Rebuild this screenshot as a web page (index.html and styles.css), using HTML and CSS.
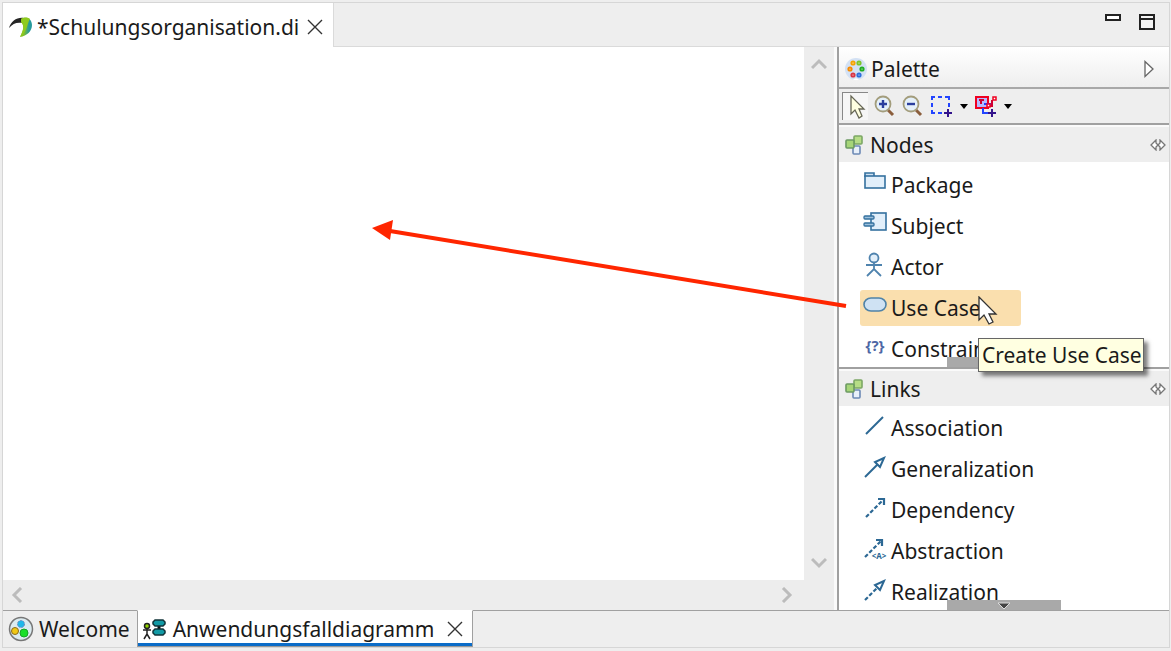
FILE: index.html
```html
<!DOCTYPE html>
<html lang="de">

<head>
    <meta charset="UTF-8">
    <meta name="viewport" content="width=device-width, initial-scale=1.0">
    <title>Schulungsorganisation.di</title>
    <link rel="stylesheet" href="styles.css">
</head>

<body>
    <div class="editor">
        <header class="tab-bar">
            <div class="file-tab">
                <svg class="file-icon" width="26" height="22" viewBox="0 0 26 22">
                    <defs>
                        <linearGradient id="beak" x1="0" x2="1">
                            <stop offset="0.3" stop-color="#84c225" />
                            <stop offset="0.75" stop-color="#279a9c" />
                        </linearGradient>
                    </defs>
                    <path d="M1 12C3 5 9 1 16 2L15 7C9 6 5 7 1 12Z" fill="#252525" />
                    <path d="M13 3C17 0 24 2 24 9C24 15 19 20 12 21C15 16 17 10 13 6Z" fill="url(#beak)" />
                    <path d="M13 3C16 1 20 1 22 3C19 7 20 15 12 21C15 15 17 9 13 6Z" fill="#8fca1f" />
                </svg>
                <button class="tab-label">*Schulungsorganisation.di</button>
                <button class="close" aria-label="Close">
                    <svg width="16" height="16" viewBox="0 0 16 16"><path d="M1 1L15 15M15 1L1 15" stroke="#333" stroke-width="1.4" /></svg>
                </button>
            </div>
            <div class="window-buttons">
                <button aria-label="Minimize">
                    <svg width="16" height="16" viewBox="0 0 16 16"><path d="M1 1H15V6H1Z" fill="#fff" stroke="#222" stroke-width="2" /></svg>
                </button>
                <button aria-label="Maximize">
                    <svg width="16" height="16" viewBox="0 0 16 16"><path d="M1 1H15V15H1ZM1 5H15" fill="#f4f4f4" stroke="#222" stroke-width="2" /></svg>
                </button>
            </div>
        </header>

        <main class="workspace">
            <div class="diagram">
                <div class="canvas"></div>
                <div class="scroll-v">
                    <button aria-label="Scroll up"><svg width="16" height="12" viewBox="0 0 16 12"><path d="M1 10L8 3L15 10" fill="none" stroke="#bcbcbc" stroke-width="3" /></svg></button>
                    <button aria-label="Scroll down"><svg width="16" height="12" viewBox="0 0 16 12"><path d="M1 2L8 9L15 2" fill="none" stroke="#bcbcbc" stroke-width="3" /></svg></button>
                </div>
                <div class="scroll-h">
                    <button aria-label="Scroll left"><svg width="12" height="16" viewBox="0 0 12 16"><path d="M10 1L3 8L10 15" fill="none" stroke="#bcbcbc" stroke-width="3" /></svg></button>
                    <button aria-label="Scroll right"><svg width="12" height="16" viewBox="0 0 12 16"><path d="M2 1L9 8L2 15" fill="none" stroke="#bcbcbc" stroke-width="3" /></svg></button>
                </div>
            </div>

            <aside class="palette">
                <div class="palette-header">
                    <svg width="24" height="24" viewBox="0 0 24 24">
                        <circle cx="12" cy="12" r="11" fill="#d3e1f4" />
                        <path d="M9 23A3.500 3.500 0 0 1 15 23Z" fill="#fff" />
                        <g fill="#fff" stroke-width="2">
                            <circle cx="9" cy="6" r="1.600" stroke="#f5a300" />
                            <circle cx="15" cy="6" r="1.600" stroke="#7dc52a" />
                            <circle cx="6" cy="12" r="1.600" stroke="#f58b00" />
                            <circle cx="18" cy="12" r="1.600" stroke="#1fae22" />
                            <circle cx="9" cy="18" r="1.600" stroke="#d93545" />
                            <circle cx="15" cy="18" r="1.600" stroke="#2d6fdc" />
                        </g>
                    </svg>
                    <span class="title">Palette</span>
                    <button aria-label="Hide palette"><svg width="10" height="18" viewBox="0 0 10 18"><path d="M1 1.500L9 9L1 16.500Z" fill="#fff" stroke="#666" stroke-width="1.300" /></svg></button>
                </div>

                <div class="toolbar">
                    <button class="tool selected" aria-label="Select">
                        <svg width="18" height="26" viewBox="0 0 18 26"><path d="M3 2V20L7 16L11 24L14 22L11 15H16Z" fill="#ffffe0" stroke="#666655" stroke-width="1.300" /></svg>
                    </button>
                    <button class="tool" aria-label="Zoom in">
                        <svg width="22" height="22" viewBox="0 0 22 22">
                            <path d="M14 15L19 20" stroke="#8b5e3c" stroke-width="3" />
                            <circle cx="9" cy="9" r="7.500" fill="#e4f0fa" stroke="#a39d7c" stroke-width="1.800" />
                            <path d="M5 9H13M9 5V13" stroke="#2a3f9e" stroke-width="2.400" />
                        </svg>
                    </button>
                    <button class="tool" aria-label="Zoom out">
                        <svg width="22" height="22" viewBox="0 0 22 22">
                            <path d="M14 15L19 20" stroke="#8b5e3c" stroke-width="3" />
                            <circle cx="9" cy="9" r="7.500" fill="#e4f0fa" stroke="#a39d7c" stroke-width="1.800" />
                            <path d="M5 9H13" stroke="#2a3f9e" stroke-width="2.400" />
                        </svg>
                    </button>
                    <button class="tool" aria-label="Marquee">
                        <svg width="24" height="22" viewBox="0 0 24 22">
                            <path d="M5 2H2V5M8 2H12M15 2H19V5M2 8V12M19 8V12M2 15V18H5M8 18H12" fill="none" stroke="#2244ff" stroke-width="2" />
                            <path d="M18 14V22M14 18H22" stroke="#33148c" stroke-width="2" />
                        </svg>
                        <span class="drop-arrow"></span>
                    </button>
                    <button class="tool" aria-label="Pin tools">
                        <svg width="24" height="22" viewBox="0 0 24 22">
                            <rect x="2" y="2" width="12" height="11" fill="#b7b9ff" stroke="#f00020" stroke-width="2" />
                            <path d="M9 13V18H14M10 9H19" fill="none" stroke="#2244ff" stroke-width="2" />
                            <path d="M5 5H10M7 5V9M14 11H18V5" fill="none" stroke="#d00030" stroke-width="2" />
                            <path d="M19 2H22V5H19ZM13 9H16V12H13Z" fill="#fff" stroke="#f00020" stroke-width="1.500" />
                            <path d="M18 14V22M14 18H22" stroke="#33148c" stroke-width="2" />
                        </svg>
                        <span class="drop-arrow"></span>
                    </button>
                </div>

                <section class="drawer">
                    <div class="drawer-header">
                        <svg width="18" height="20" viewBox="0 0 18 20">
                            <rect x="8" y="11" width="7" height="8" rx="1" fill="#e8f0fa" stroke="#6c89b5" stroke-width="1.600" />
                            <rect x="9" y="1" width="8" height="8" rx="1" fill="#b6dd86" stroke="#7ca765" stroke-width="1.600" />
                            <rect x="1" y="5" width="8" height="8" rx="1" fill="#a6d578" stroke="#6c9a62" stroke-width="1.600" />
                        </svg>
                        <span class="title">Nodes</span>
                        <button aria-label="Pin open"><svg width="16" height="12" viewBox="0 0 16 12"><path d="M6 1L1 6L6 11V8L8 6L10 8V11L15 6L10 1V4L8 6L6 4Z" fill="#fff" stroke="#777" stroke-width="1.300" /></svg></button>
                    </div>
                    <ul class="entries">
                        <li>
                            <button class="entry">
                                <svg width="24" height="24" viewBox="0 0 24 24">
                                    <path d="M2 6V2H11V6" fill="#cfe1f2" stroke="#35719f" stroke-width="1.600" />
                                    <rect x="2" y="5" width="20" height="12" fill="#e2effa" stroke="#35719f" stroke-width="1.600" />
                                </svg>
                                Package
                            </button>
                        </li>
                        <li>
                            <button class="entry">
                                <svg width="24" height="24" viewBox="0 0 24 24">
                                    <rect x="8" y="1" width="15" height="17" fill="#e2effa" stroke="#35719f" stroke-width="1.600" />
                                    <rect x="1" y="4" width="10" height="3" rx="1" fill="#9dc0dd" stroke="#35719f" stroke-width="1.300" />
                                    <rect x="1" y="11" width="10" height="3" rx="1" fill="#9dc0dd" stroke="#35719f" stroke-width="1.300" />
                                </svg>
                                Subject
                            </button>
                        </li>
                        <li>
                            <button class="entry">
                                <svg width="24" height="26" viewBox="0 0 24 26">
                                    <circle cx="11" cy="6" r="4.500" fill="#e2effa" stroke="#4f83ae" stroke-width="1.800" />
                                    <path d="M11 11V17M3 13H19M4 24L11 17L18 24" fill="none" stroke="#4f83ae" stroke-width="1.800" />
                                </svg>
                                Actor
                            </button>
                        </li>
                        <li class="hovered">
                            <button class="entry active" aria-describedby="tip">
                                <svg width="24" height="24" viewBox="0 0 24 24">
                                    <rect x="1" y="4" width="22" height="13" rx="7" fill="#cfe2f3" stroke="#4f83a8" stroke-width="1.600" />
                                </svg>
                                Use Case
                            </button>
                            <svg class="pointer" width="20" height="30" viewBox="0 0 20 30"><path d="M1 1V24L6 19L11 28L15 26L11 18H18Z" fill="#fff" stroke="#333" stroke-width="1.300" /></svg>
                            <span class="tooltip" id="tip" role="tooltip">Create Use Case</span>
                        </li>
                        <li>
                            <button class="entry">
                                <svg width="24" height="24" viewBox="0 0 24 24">
                                    <text class="constraint-glyph" x="12" y="16" text-anchor="middle">{?}</text>
                                </svg>
                                Constraint
                            </button>
                        </li>
                    </ul>
                    <div class="scroll-more"></div>
                </section>

                <section class="drawer">
                    <div class="drawer-header">
                        <svg width="18" height="20" viewBox="0 0 18 20">
                            <rect x="8" y="11" width="7" height="8" rx="1" fill="#e8f0fa" stroke="#6c89b5" stroke-width="1.600" />
                            <rect x="9" y="1" width="8" height="8" rx="1" fill="#b6dd86" stroke="#7ca765" stroke-width="1.600" />
                            <rect x="1" y="5" width="8" height="8" rx="1" fill="#a6d578" stroke="#6c9a62" stroke-width="1.600" />
                        </svg>
                        <span class="title">Links</span>
                        <button aria-label="Pin open"><svg width="16" height="12" viewBox="0 0 16 12"><path d="M6 1L1 6L6 11V8L8 6L10 8V11L15 6L10 1V4L8 6L6 4Z" fill="#fff" stroke="#777" stroke-width="1.300" /></svg></button>
                    </div>
                    <ul class="entries">
                        <li>
                            <button class="entry">
                                <svg width="24" height="24" viewBox="0 0 24 24"><path d="M3 19L20 2" stroke="#2c6894" stroke-width="2" /></svg>
                                Association
                            </button>
                        </li>
                        <li>
                            <button class="entry">
                                <svg width="24" height="24" viewBox="0 0 24 24">
                                    <path d="M2 21L15 8" stroke="#2c6894" stroke-width="2" />
                                    <path d="M21 2L12 6L17 11Z" fill="#fff" stroke="#2c6894" stroke-width="2" />
                                </svg>
                                Generalization
                            </button>
                        </li>
                        <li>
                            <button class="entry">
                                <svg width="24" height="24" viewBox="0 0 24 24">
                                    <path d="M3 20L20 3" stroke="#2c6894" stroke-width="2.200" stroke-dasharray="4 2" />
                                    <path d="M15 2H21V8" fill="none" stroke="#2c6894" stroke-width="2.200" />
                                </svg>
                                Dependency
                            </button>
                        </li>
                        <li>
                            <button class="entry">
                                <svg width="24" height="24" viewBox="0 0 24 24">
                                    <path d="M2 19L19 2" stroke="#2c6894" stroke-width="2.200" stroke-dasharray="4 2" />
                                    <path d="M13 2H19V8" fill="none" stroke="#2c6894" stroke-width="2.200" />
                                    <text class="abstraction-glyph" x="16" y="21" text-anchor="middle">&lt;A&gt;</text>
                                </svg>
                                Abstraction
                            </button>
                        </li>
                        <li>
                            <button class="entry">
                                <svg width="24" height="24" viewBox="0 0 24 24">
                                    <path d="M2 21L15 8" stroke="#2c6894" stroke-width="2.200" stroke-dasharray="4 2" />
                                    <path d="M21 2L12 6L17 11Z" fill="#fff" stroke="#2c6894" stroke-width="2" />
                                </svg>
                                Realization
                            </button>
                        </li>
                    </ul>
                    <div class="scroll-more"><svg width="12" height="7" viewBox="0 0 12 7"><path d="M0 1H12L6 7Z" fill="#444" stroke="#ddd" stroke-width="1" /></svg></div>
                </section>
            </aside>

            <!-- drag direction from palette entry to canvas -->
            <svg class="drag-arrow" width="476" height="90" viewBox="0 0 476 90">
                <path d="M18 12L474 87" stroke="#ff2600" stroke-width="4" />
                <path d="M0 9L21 1L18 21Z" fill="#ff2600" />
            </svg>
        </main>

        <footer class="page-tabs">
            <button class="page-tab">
                <svg width="26" height="26" viewBox="0 0 26 26">
                    <circle cx="13" cy="13" r="11.500" fill="#dcebf0" stroke="#777" stroke-width="1.500" />
                    <circle cx="13" cy="8" r="3.500" fill="#20b8ea" stroke="#78b" stroke-width="1" stroke-dasharray="2 1" />
                    <circle cx="7" cy="15" r="3.500" fill="#f0c814" stroke="#886a20" stroke-width="1" />
                    <circle cx="16" cy="17" r="4" fill="#18df28" stroke="#16a324" stroke-width="1" />
                </svg>
                Welcome
            </button>
            <div class="page-tab current">
                <svg width="26" height="22" viewBox="0 0 26 22">
                    <path d="M5 10V16M1 12H9M2 21L5 16L8 21" fill="none" stroke="#222" stroke-width="1.500" />
                    <circle cx="5" cy="8" r="2.500" fill="#93d500" stroke="#222" stroke-width="1.500" />
                    <path d="M17 8V12" stroke="#111" stroke-width="3" />
                    <path d="M13 2H21L23 4V6L21 8H13L11 6V4ZM13 11H21L23 13V15L21 17H13L11 15V13Z" fill="#129aa5" stroke="#12343a" stroke-width="1.500" />
                </svg>
                <button class="tab-label">Anwendungsfalldiagramm</button>
                <button class="close" aria-label="Close">
                    <svg width="16" height="16" viewBox="0 0 16 16"><path d="M1 1L15 15M15 1L1 15" stroke="#333" stroke-width="1.4" /></svg>
                </button>
            </div>
            <div class="filler"></div>
        </footer>
    </div>
</body>

</html>
```
FILE: styles.css
```css
* {
    box-sizing: border-box;
}

body {
    margin: 0;
    padding: 2px 1px 3px 2px;
    height: 100vh;
    background-color: #eee;
    font-family: "Noto Sans", "Segoe UI", sans-serif;
    font-size: 21px;
    line-height: 28px;
    color: #1a1a1a;
}

button {
    display: flex;
    align-items: center;
    margin: 0;
    padding: 0;
    border: none;
    background: none;
    font: inherit;
    color: inherit;
    white-space: nowrap;
}

svg {
    display: block;
    flex: none;
}

.editor {
    display: flex;
    flex-direction: column;
    height: 100%;
    border: 1px solid #d6d6d6;
}

.tab-bar {
    display: flex;
    justify-content: space-between;
    height: 44px;
    border-bottom: 1px solid #dadada;
}

.file-tab {
    display: flex;
    align-items: center;
    height: 44px;
    padding: 4px 10px 0 5px;
    background-color: #fff;
    border-right: 1px solid #dadada;
}

.file-icon {
    margin-right: 3px;
}

.close {
    margin-left: 8px;
}

.window-buttons {
    display: flex;
    align-items: flex-start;
    gap: 18px;
    padding: 11px 14px;
}

.workspace {
    position: relative;
    display: flex;
    flex: 1;
    min-height: 0;
}

.diagram {
    display: grid;
    flex: 1;
    grid-template-columns: 1fr 30px;
    grid-template-rows: 1fr 30px;
    border-right: 3px solid #fafafa;
    background-color: #ededed;
}

.canvas {
    background-color: #fff;
}

.scroll-v,
.scroll-h {
    display: flex;
    justify-content: space-between;
    align-items: center;
}

.scroll-v {
    flex-direction: column;
    padding: 11px 0;
}

.scroll-h {
    padding: 0 11px 0 8px;
}

.palette {
    display: flex;
    flex-direction: column;
    width: 332px;
    border-left: 2px solid #a0a0a0;
    background-color: #fff;
}

.palette-header {
    display: flex;
    align-items: center;
    gap: 3px;
    height: 42px;
    padding: 3px 15px 0 5px;
    background: linear-gradient(#fff, #eee);
    border-bottom: 2px solid #a8a8a8;
}

.title {
    flex: 1;
}

.toolbar {
    display: flex;
    align-items: center;
    gap: 6px;
    height: 36px;
    padding: 0 3px;
    background-color: #eee;
    border-bottom: 2px solid #a0a0a0;
}

.tool.selected {
    width: 26px;
    height: 28px;
    padding-left: 5px;
    border-top: 1px solid #888;
    border-left: 1px solid #888;
    background-color: #f6f6f6;
}

.drop-arrow {
    margin-left: 6px;
    border: 4px solid transparent;
    border-top: 5px solid #000;
    border-bottom: none;
}

.drawer {
    position: relative;
    display: flex;
    flex: 1;
    flex-direction: column;
    min-height: 0;
}

.drawer + .drawer {
    border-top: 2px solid #a0a0a0;
}

.drawer-header {
    display: flex;
    flex: none;
    align-items: center;
    gap: 7px;
    height: 37px;
    padding: 1px 3px 0 6px;
    background-color: #eee;
    border-top: 2px solid #fafafa;
}

.entries {
    display: grid;
    flex: 1;
    grid-auto-rows: 41px;
    align-items: center;
    min-height: 0;
    margin: 0;
    padding: 2px 0 0 21px;
    list-style: none;
}

.entry {
    gap: 4px;
    height: 36px;
    padding: 0 4px 0 3px;
    border-radius: 3px;
}

.entry svg {
    margin-bottom: 3px;
}

.entry.active {
    width: 161px;
    background-color: #fadfae;
}

.hovered {
    position: relative;
}

.pointer {
    position: absolute;
    top: 6px;
    left: 118px;
    z-index: 2;
}

.tooltip {
    position: absolute;
    top: 48px;
    left: 118px;
    z-index: 2;
    padding: 2px 1px 2px 3px;
    border: 1px solid #666;
    background-color: #ffffe1;
    box-shadow: 4px 4px 4px rgba(0, 0, 0, 0.5);
    white-space: nowrap;
}

.constraint-glyph {
    font-size: 15px;
    font-weight: bold;
    fill: #4d67a5;
}

.abstraction-glyph {
    font-size: 8px;
    font-weight: bold;
    fill: #2c6894;
}

.scroll-more {
    position: absolute;
    bottom: 0;
    left: 50%;
    display: flex;
    justify-content: center;
    width: 114px;
    height: 10px;
    padding-top: 2px;
    transform: translateX(-50%);
    background-color: #a9a9a9;
}

.drag-arrow {
    position: absolute;
    top: 172px;
    right: 321px;
    pointer-events: none;
}

.page-tabs {
    display: flex;
    height: 37px;
}

.page-tab {
    display: flex;
    align-items: center;
    gap: 5px;
    padding: 0 7px 0 5px;
    border-top: 1px solid #a0a0a0;
}

.page-tab.current {
    padding: 0 9px 0 4px;
    border: 1px solid #a0a0a0;
    border-top-color: #fff;
    border-bottom: none;
    background-color: #fff;
    box-shadow: inset 0 -1px #999, inset 0 -4px #0a6cc8;
}

.filler {
    flex: 1;
    border-top: 1px solid #a0a0a0;
}
```
